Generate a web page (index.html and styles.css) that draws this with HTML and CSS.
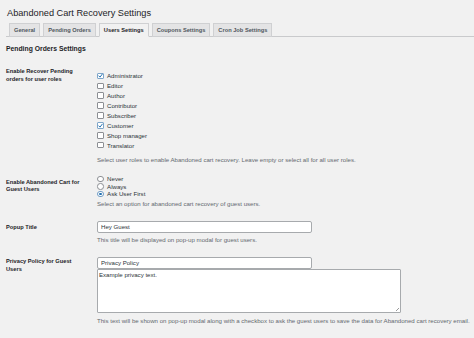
FILE: index.html
```html
<!DOCTYPE html>
<html lang="en">
<head>
    <meta charset="UTF-8">
    <meta name="viewport" content="width=device-width, initial-scale=1.0">
    <title>Abandoned Cart Recovery Settings</title>
    <link rel="stylesheet" href="styles.css">
</head>
<body>
    <div class="wrap">
        <h1>Abandoned Cart Recovery Settings</h1>
        <nav class="nav-tab-wrapper">
            <a href="#" class="nav-tab">General</a>
            <a href="#" class="nav-tab">Pending Orders</a>
            <a href="#" class="nav-tab nav-tab-active">Users Settings</a>
            <a href="#" class="nav-tab">Coupons Settings</a>
            <a href="#" class="nav-tab">Cron Job Settings</a>
        </nav>

        <h2>Pending Orders Settings</h2>

        <div class="form-table">
            <div class="row row-roles">
                <div class="th">Enable Recover Pending orders for user roles</div>
                <div class="td">
                    <ul class="checklist">
                        <li><span class="box checked"><svg viewBox="0 0 10 10"><path d="M2.2 5.2 4.3 7.3 7.9 2.6"/></svg></span>Administrator</li>
                        <li><span class="box"></span>Editor</li>
                        <li><span class="box"></span>Author</li>
                        <li><span class="box"></span>Contributor</li>
                        <li><span class="box"></span>Subscriber</li>
                        <li><span class="box checked"><svg viewBox="0 0 10 10"><path d="M2.2 5.2 4.3 7.3 7.9 2.6"/></svg></span>Customer</li>
                        <li><span class="box"></span>Shop manager</li>
                        <li><span class="box"></span>Translator</li>
                    </ul>
                    <p class="description">Select user roles to enable Abandoned cart recovery. Leave empty or select all for all user roles.</p>
                </div>
            </div>

            <div class="row row-guest">
                <div class="th">Enable Abandoned Cart for Guest Users</div>
                <div class="td">
                    <ul class="radiolist">
                        <li><span class="radio"></span>Never</li>
                        <li><span class="radio"></span>Always</li>
                        <li><span class="radio checked"></span>Ask User First</li>
                    </ul>
                    <p class="description">Select an option for abandoned cart recovery of guest users.</p>
                </div>
            </div>

            <div class="row row-popup">
                <div class="th">Popup Title</div>
                <div class="td">
                    <input type="text" class="regular-text" value="Hey Guest">
                    <p class="description">This title will be displayed on pop-up modal for guest users.</p>
                </div>
            </div>

            <div class="row row-privacy">
                <div class="th">Privacy Policy for Guest Users</div>
                <div class="td">
                    <input type="text" class="regular-text" value="Privacy Policy">
                    <div class="textarea-wrap">
                        <textarea rows="4">Example privacy text.</textarea>
                    </div>
                    <p class="description">This text will be shown on pop-up modal along with a checkbox to ask the guest users to save the data for Abandoned cart recovery email.</p>
                </div>
            </div>
        </div>
    </div>
</body>
</html>
```

FILE: styles.css
```css
body {
    margin: 0;
    padding: 0 0 0 6px;
    background-color: #f1f1f1;
    font-family: "Liberation Sans", Arial, sans-serif;
    font-size: 6.1px;
    color: #3c434a;
}
h1 {
    margin: 0;
    padding: 7px 0 0 1px;
    font-size: 9.2px;
    font-weight: 400;
    line-height: 12px;
    color: #1d2327;
}
.nav-tab-wrapper {
    display: flex;
    gap: 3px;
    margin-top: 4px;
    padding-left: 3px;
    border-bottom: 1px solid #c9cacc;
}
.nav-tab {
    margin-bottom: -1px;
    padding: 0 4px;
    line-height: 12px;
    border: 1px solid #cfd0d2;
    background-color: #e4e4e5;
    color: #50575e;
    font-size: 5.7px;
    font-weight: bold;
    text-decoration: none;
}
.nav-tab-active {
    background-color: #f1f1f1;
    border-bottom-color: #f1f1f1;
    color: #1d2327;
}
h2 {
    margin: 8px 0 11.5px;
    font-size: 6.8px;
    line-height: 8px;
    color: #1d2327;
}
.row {
    display: grid;
    grid-template-columns: 91px 1fr;
}
.th {
    padding-right: 11px;
    font-size: 5.7px;
    font-weight: bold;
    line-height: 7.3px;
    color: #1d2327;
}
.td {
    padding: 6.5px 0;
}
.row-roles .th { padding-top: 3.85px; }
.row-guest .th { padding-top: 8.35px; }
.row-popup .th { padding-top: 9.85px; }
.row-privacy .th { padding-top: 7.85px; }

.checklist,
.radiolist {
    margin: 0;
    padding: 0;
    list-style: none;
    color: #2c3338;
}
.checklist li {
    display: flex;
    align-items: center;
    gap: 3.5px;
    height: 9.9px;
}
.radiolist {
    margin-top: -1.75px;
}
.radiolist li {
    display: flex;
    align-items: center;
    gap: 3.5px;
    height: 7.5px;
}
.box {
    display: inline-flex;
    align-items: center;
    justify-content: center;
    box-sizing: border-box;
    width: 6.5px;
    height: 6.5px;
    border: 1px solid #8c8f94;
    border-radius: 1px;
    background-color: #fff;
}
.box.checked {
    border-color: #7fa6c9;
}
.box svg {
    width: 7px;
    height: 7px;
    flex-shrink: 0;
    fill: none;
    stroke: #2271b1;
    stroke-width: 1.4;
}
.radio {
    display: inline-flex;
    align-items: center;
    justify-content: center;
    box-sizing: border-box;
    width: 6.6px;
    height: 6.6px;
    border: 1px solid #8c8f94;
    border-radius: 50%;
    background-color: #fff;
}
.radio.checked {
    border-color: #6f9cc4;
}
.radio.checked::after {
    content: "";
    width: 2.8px;
    height: 2.8px;
    border-radius: 50%;
    background-color: #2271b1;
}
.description {
    margin: 3px 0 0;
    line-height: 8px;
    color: #646970;
}
.row-roles .description { margin-top: 5.8px; }
.row-guest .description { margin-top: 2.25px; }
.row-privacy .description { margin-top: 4px; }

input[type="text"] {
    display: block;
    box-sizing: border-box;
    width: 215px;
    height: 12px;
    margin: 0;
    padding: 0 3px;
    border: 1px solid #a7aaad;
    border-radius: 2px;
    background-color: #fff;
    font-family: "Liberation Sans", Arial, sans-serif;
    font-size: 6.1px;
    color: #2c3338;
    outline: none;
}
.textarea-wrap {
    position: relative;
    width: 304px;
}
textarea {
    display: block;
    box-sizing: border-box;
    width: 304px;
    height: 44px;
    margin: 0;
    padding: 1px 1px;
    border: 1px solid #a7aaad;
    border-radius: 1px;
    background-color: #fff;
    font-family: "Liberation Sans", Arial, sans-serif;
    font-size: 6.1px;
    line-height: 8px;
    color: #2c3338;
    resize: none;
    outline: none;
}
.textarea-wrap::after {
    content: "";
    position: absolute;
    right: 2px;
    bottom: 2px;
    width: 3px;
    height: 3px;
    background: linear-gradient(135deg, transparent 45%, #9a9a9a 45%, #9a9a9a 60%, transparent 60%);
}
```
